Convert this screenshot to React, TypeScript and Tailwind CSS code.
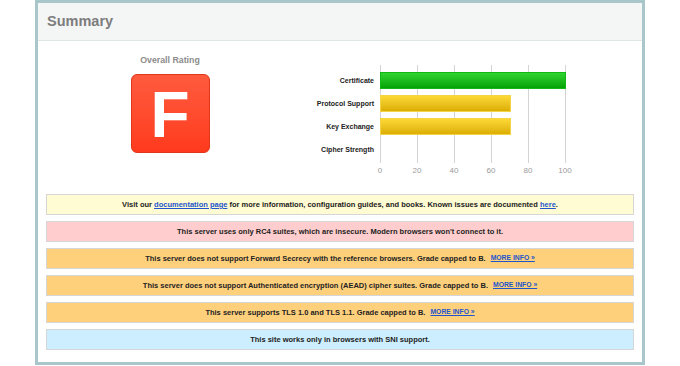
import type { ReactNode } from "react";

type Bar = { label: string; value: number; tone: "green" | "yellow" | "none" };

const bars: Bar[] = [
  { label: "Certificate", value: 100, tone: "green" },
  { label: "Protocol Support", value: 70, tone: "yellow" },
  { label: "Key Exchange", value: 70, tone: "yellow" },
  { label: "Cipher Strength", value: 0, tone: "none" },
];

const ticks = [0, 20, 40, 60, 80, 100];

const barClass = {
  green:
    "border border-[#14b814] bg-gradient-to-b from-[#2fd42f] to-[#02a302]",
  yellow:
    "border border-[#f3d447] bg-gradient-to-b from-[#fdd935] to-[#dcae00]",
  none: "",
};

const msgClass =
  "flex h-[21px] items-center justify-center border border-[#d6d6d6] text-[7.5px] font-bold text-[#222]";

const linkClass = "text-[#2255cc] underline";

function MoreInfo() {
  return (
    <a className="ml-[5px] text-[6.8px] font-bold text-[#2255cc] underline" href="#">
      MORE INFO »
    </a>
  );
}

function Message({ bg, children }: { bg: string; children: ReactNode }) {
  return <div className={`${msgClass} ${bg}`}>{children}</div>;
}

function Chart() {
  return (
    <div className="flex pt-[24px]">
      <div className="flex w-[78px] flex-col pt-[7px] pr-[6px] text-right">
        {bars.map((bar) => (
          <div
            key={bar.label}
            className="mb-[6px] h-[17px] text-[7px] font-bold leading-[17px] whitespace-nowrap text-[#222]"
          >
            {bar.label}
          </div>
        ))}
      </div>
      <div>
        <div className="relative h-[98px] w-[186px]">
          {ticks.map((t) => (
            <div
              key={t}
              className="absolute top-0 bottom-0 w-px bg-[#d4d4d4]"
              style={{ left: `${(t / 100) * 185}px` }}
            />
          ))}
          <div className="relative flex flex-col pt-[7px]">
            {bars.map((bar) => (
              <div key={bar.label} className="mb-[6px] h-[17px]">
                {bar.value > 0 && (
                  <div
                    className={`h-[17px] ${barClass[bar.tone]}`}
                    style={{ width: `${(bar.value / 100) * 185 + 1}px` }}
                  />
                )}
              </div>
            ))}
          </div>
        </div>
        <div className="relative h-[16px] w-[186px]">
          {ticks.map((t) => (
            <span
              key={t}
              className="absolute top-[2px] -translate-x-1/2 text-[8px] text-[#9a9a9a]"
              style={{ left: `${(t / 100) * 185}px` }}
            >
              {t}
            </span>
          ))}
        </div>
      </div>
    </div>
  );
}

export default function App() {
  return (
    <div className="h-[366px] w-[680px] bg-white font-['Liberation_Sans',Arial,sans-serif]">
      <div className="ml-[35px] w-[610px] border-[3px] border-[#a9c6ca]">
        <div className="flex h-[38px] items-center border-b border-[#dfe6e6] bg-[#f4f5f5] pl-[9px]">
          <h1 className="text-[14.5px] font-bold text-[#7d7d7d]">Summary</h1>
        </div>
        <div className="flex">
          <div className="flex w-[264px] flex-col items-center pt-[13px]">
            <div className="text-[8.8px] font-bold text-[#8c8c8c]">Overall Rating</div>
            <div className="mt-[7px] flex h-[79px] w-[79px] items-center justify-center rounded-[6px] border border-[#e0361a] bg-gradient-to-b from-[#ff5a3d] to-[#ff3a1c] pt-[2px] text-[64px] leading-none font-bold text-white">
              F
            </div>
          </div>
          <Chart />
        </div>
        <div className="flex flex-col gap-[6px] px-[8px] pt-[15px] pb-[12px]">
          <Message bg="bg-[#fffbd3]">
            <span>
              Visit our{" "}
              <a className={linkClass} href="#">
                documentation page
              </a>{" "}
              for more information, configuration guides, and books. Known issues are documented{" "}
              <a className={linkClass} href="#">
                here
              </a>
              .
            </span>
          </Message>
          <Message bg="bg-[#ffcdcd]">
            This server uses only RC4 suites, which are insecure. Modern browsers won't connect to it.
          </Message>
          <Message bg="bg-[#ffd07c]">
            This server does not support Forward Secrecy with the reference browsers. Grade capped to B.
            <MoreInfo />
          </Message>
          <Message bg="bg-[#ffd07c]">
            This server does not support Authenticated encryption (AEAD) cipher suites. Grade capped to B.
            <MoreInfo />
          </Message>
          <Message bg="bg-[#ffd07c]">
            This server supports TLS 1.0 and TLS 1.1. Grade capped to B.
            <MoreInfo />
          </Message>
          <Message bg="bg-[#cdeefe]">This site works only in browsers with SNI support.</Message>
        </div>
      </div>
    </div>
  );
}
